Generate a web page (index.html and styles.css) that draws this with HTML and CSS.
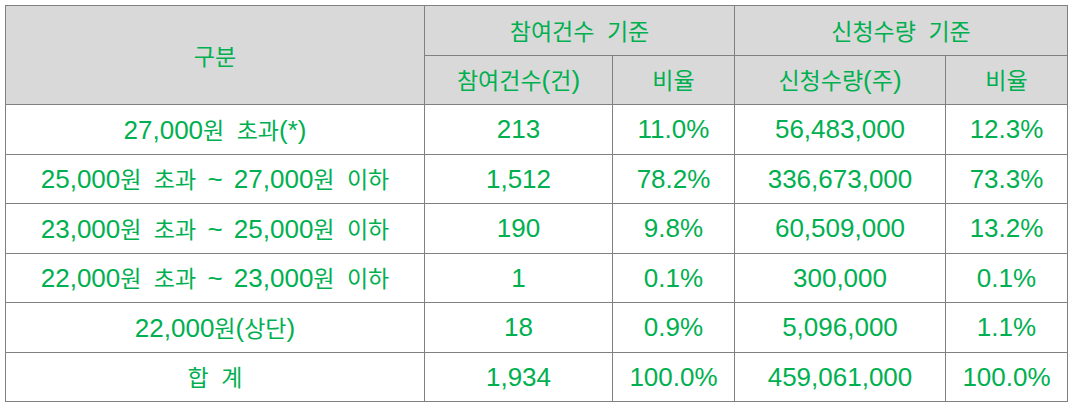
FILE: index.html
```html
<!DOCTYPE html>
<html lang="ko">
<head>
<meta charset="utf-8">
<link rel="stylesheet" href="styles.css">
</head>
<body>
<table class="stats">
  <colgroup>
    <col class="c1"><col class="c2"><col class="c3"><col class="c4"><col class="c5">
  </colgroup>
  <thead>
    <tr>
      <th rowspan="2"><span class="ko">구분</span></th>
      <th colspan="2"><span class="ko">참여건수 기준</span></th>
      <th colspan="2"><span class="ko">신청수량 기준</span></th>
    </tr>
    <tr>
      <th><span class="ko">참여건수</span>(<span class="ko">건</span>)</th>
      <th><span class="ko">비율</span></th>
      <th><span class="ko">신청수량</span>(<span class="ko">주</span>)</th>
      <th><span class="ko">비율</span></th>
    </tr>
  </thead>
  <tbody>
    <tr><td>27,000<span class="ko">원 초과</span>(*)</td><td>213</td><td>11.0%</td><td>56,483,000</td><td>12.3%</td></tr>
    <tr><td>25,000<span class="ko">원 초과</span> ~ 27,000<span class="ko">원 이하</span></td><td>1,512</td><td>78.2%</td><td>336,673,000</td><td>73.3%</td></tr>
    <tr><td>23,000<span class="ko">원 초과</span> ~ 25,000<span class="ko">원 이하</span></td><td>190</td><td>9.8%</td><td>60,509,000</td><td>13.2%</td></tr>
    <tr><td>22,000<span class="ko">원 초과</span> ~ 23,000<span class="ko">원 이하</span></td><td>1</td><td>0.1%</td><td>300,000</td><td>0.1%</td></tr>
    <tr><td>22,000<span class="ko">원</span>(<span class="ko">상단</span>)</td><td>18</td><td>0.9%</td><td>5,096,000</td><td>1.1%</td></tr>
    <tr><td><span class="ko">합 계</span></td><td>1,934</td><td>100.0%</td><td>459,061,000</td><td>100.0%</td></tr>
  </tbody>
</table>
</body>
</html>
```
FILE: styles.css
```css
html, body {
  margin: 0;
  padding: 0;
  background: #ffffff;
}
body {
  padding: 5px;
}
.stats {
  border-collapse: collapse;
  table-layout: fixed;
  width: 1063px;
  border: 1px solid #000000;
  font-family: "Liberation Sans", "Noto Sans CJK KR", sans-serif;
  font-size: 26px;
  word-spacing: 4px;
  color: #00b050;
}
.c1 { width: 419px; }
.c2 { width: 188px; }
.c3 { width: 122px; }
.c4 { width: 211px; }
.c5 { width: 122px; }
.stats th,
.stats td {
  border: 1px solid #808080;
  text-align: center;
  vertical-align: middle;
  padding: 0;
  height: 48.5px;
  line-height: 30px;
  font-weight: normal;
  white-space: nowrap;
}
.stats th {
  background: #d9d9d9;
}
.ko {
  font-family: "Noto Sans CJK KR", sans-serif;
  font-size: 23px;
  word-spacing: 6px;
}
```
